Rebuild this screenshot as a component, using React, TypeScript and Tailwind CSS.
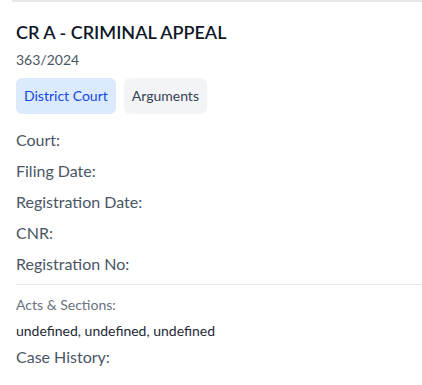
export default function App() {
  const rows = ['Court:', 'Filing Date:', 'Registration Date:', 'CNR:', 'Registration No:']

  return (
    <div className="min-h-screen bg-white pl-3 font-['Lato',sans-serif]">
      <div className="border-t-2 border-gray-200 pt-4">
        <div className="pl-1">
          <h2 className="text-[18px] font-semibold leading-7 text-gray-900">CR A - CRIMINAL APPEAL</h2>
          <p className="mt-1 text-sm leading-5 text-gray-600">363/2024</p>
          <div className="mt-2 flex gap-2">
            <span className="rounded-md bg-blue-100 px-2 py-2 text-sm leading-5 text-blue-700">District Court</span>
            <span className="rounded-md bg-gray-100 px-2 py-2 text-sm leading-5 text-gray-700">Arguments</span>
          </div>
          <div className="mt-[14px] flex flex-col gap-[7px]">
            {rows.map((r) => (
              <p key={r} className="text-base leading-6 text-gray-600">
                {r}
              </p>
            ))}
          </div>
        </div>
        <div className="ml-1 mt-2 border-t border-gray-200 pt-[10px]">
          <p className="text-sm leading-5 text-gray-500">Acts &amp; Sections:</p>
          <p className="mt-1.5 text-sm leading-5 text-gray-800">undefined, undefined, undefined</p>
          <p className="mt-1 text-base leading-6 text-gray-600">Case History:</p>
        </div>
      </div>
    </div>
  )
}
